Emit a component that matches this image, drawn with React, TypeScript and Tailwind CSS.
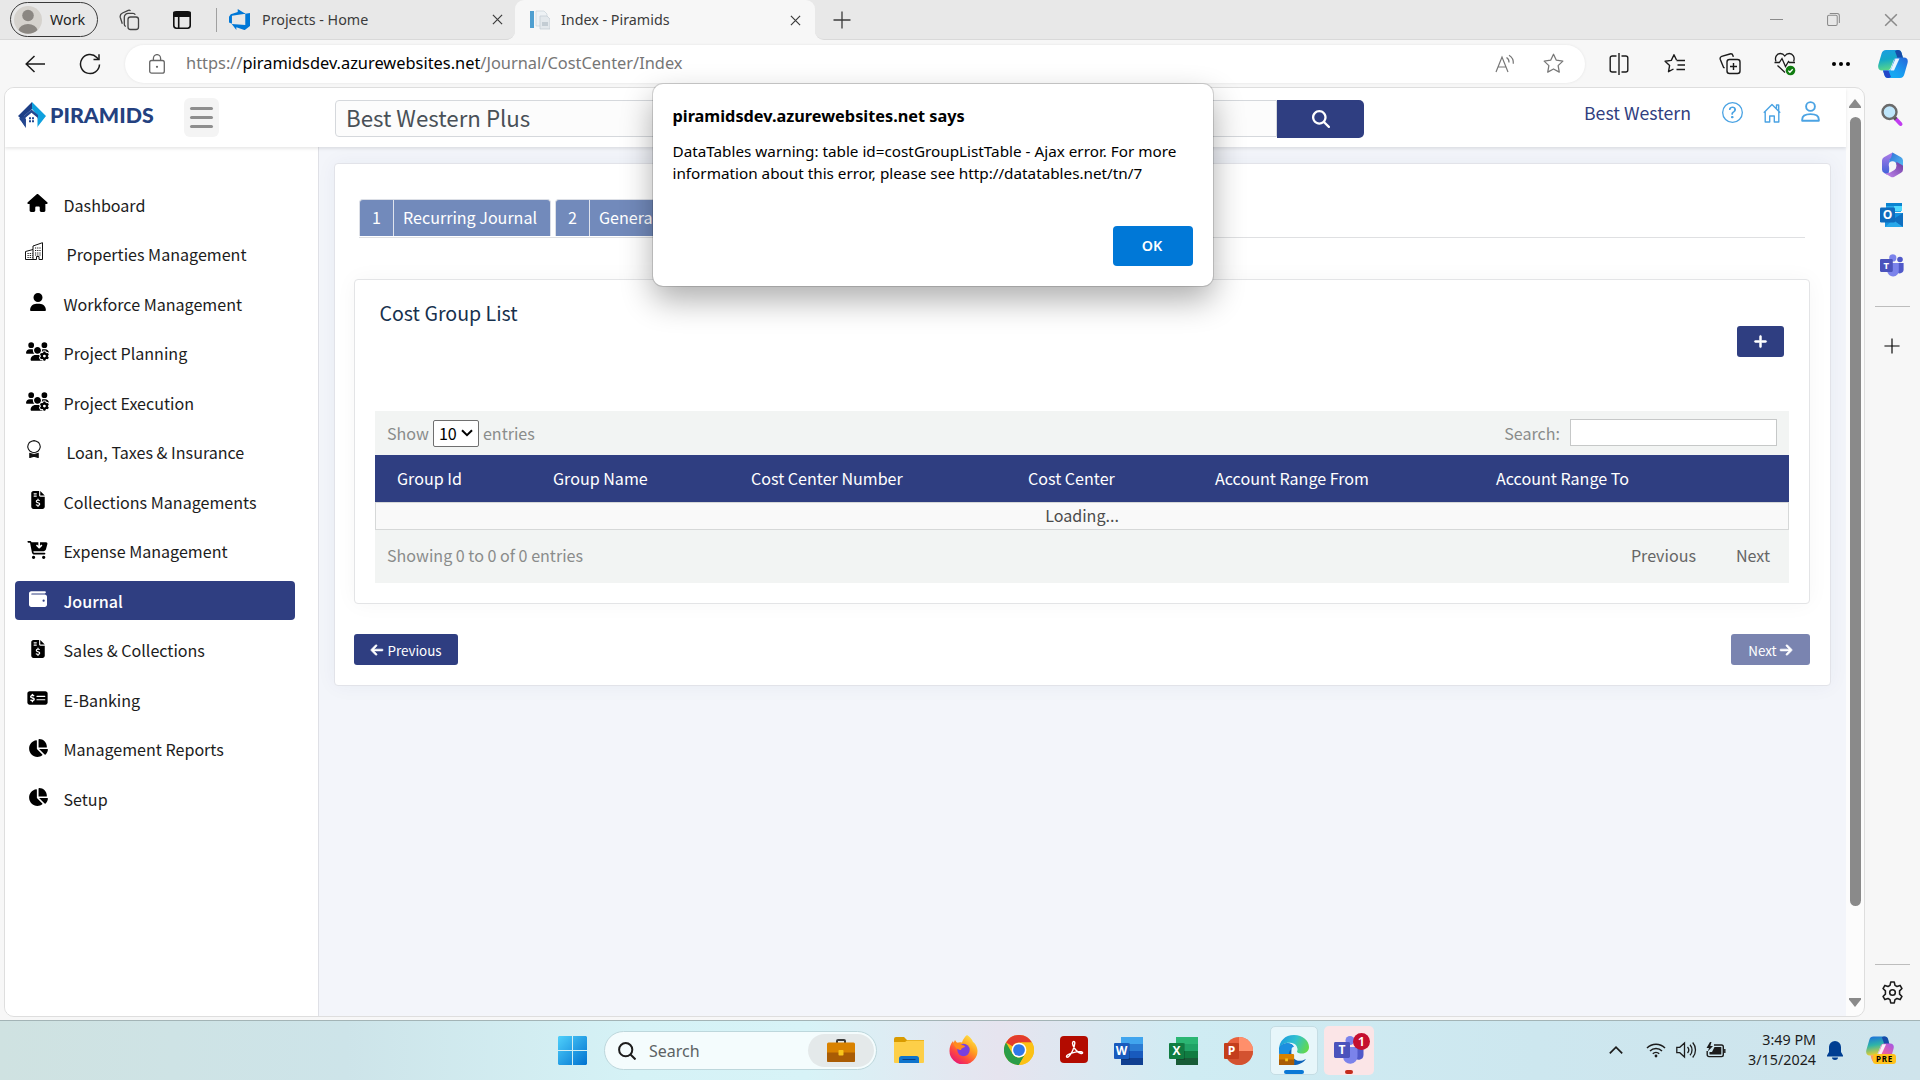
import React from "react";
import {
  FaHouse, FaUser, FaUsersGear, FaFileInvoiceDollar, FaCartArrowDown, FaWallet,
  FaMoneyCheckDollar, FaChartPie, FaMagnifyingGlass, FaPlus, FaArrowLeft, FaArrowRight,
} from "react-icons/fa6";
import { BsQuestionCircle } from "react-icons/bs";

type SvgProps = { className?: string };

/* ---------- browser icons ---------- */

const CloseIcon = ({ className = "size-3" }: SvgProps) => (
  <svg viewBox="0 0 12 12" className={className} fill="none" stroke="currentColor" strokeWidth="1.3">
    <path d="M1 1l10 10M11 1L1 11" />
  </svg>
);
const PlusThin = ({ className = "size-[18px]" }: SvgProps) => (
  <svg viewBox="0 0 18 18" className={className} fill="none" stroke="currentColor" strokeWidth="1.3">
    <path d="M9 0.5v17M0.5 9h17" />
  </svg>
);
const TabStackIcon = () => (
  <svg viewBox="0 0 22 22" className="size-[22px]" fill="none" stroke="#444" strokeWidth="1.3" strokeLinejoin="round">
    <rect x="9" y="8" width="10.5" height="12.5" rx="2.500" />
    <path d="M6.800 17.500a2.500 2.500 0 0 1-1.500-2.300V8.300a4 4 0 0 1 4-4h4.700a2.500 2.500 0 0 1 2.300 1.500" />
    <path d="M3.300 14.800L1.300 8.500A4 4 0 0 1 3.500 4L9.300 1.300a2 2 0 0 1 2.200.6" />
  </svg>
);
const WorkspaceIcon = () => (
  <svg viewBox="0 0 18 18" className="size-[18px]" fill="none" stroke="#111" strokeWidth="1.6">
    <rect x="0.8" y="0.8" width="16.4" height="16.4" rx="2.6" />
    <path d="M1 1.6h16v3.6H1z" fill="#111" />
    <path d="M5.7 5v12" />
  </svg>
);
const AzureDevOpsIcon = () => (
  <svg viewBox="0 0 20 20" className="size-[21px]">
    <path d="M20 3.7v12.4l-5.1 4L7 17.3V20l-4.4-5.7 12.9 1V4.500zM15.600 4.600L8.300 0v2.900L1.700 4.900 0 7.300v5.500l2.800 1.200V6.500z" fill="#0078d7" />
  </svg>
);
const PageFavicon = () => (
  <svg viewBox="0 0 20 20" className="size-5">
    <path d="M0 1h4v17H0z" fill="#4f9fd0" />
    <path d="M6 1h8l3 3v12H6z" fill="#eef2f5" stroke="#c9d3da" strokeWidth=".7" />
    <path d="M10 6h7l3 3v10H10z" fill="#e3e8ec" stroke="#c0cad2" strokeWidth=".7" />
    <path d="M12 12h6v4h-6z" fill="#c3ccd3" />
  </svg>
);
const BackIcon = () => (
  <svg viewBox="0 0 20 18" className="h-[18px] w-5" fill="none" stroke="#1b1b1b" strokeWidth="1.5">
    <path d="M9.500 1L1.200 9l8.300 8M1.200 9H20" />
  </svg>
);
const ReloadIcon = () => (
  <svg viewBox="0 0 22 22" className="size-[22px]" fill="none" stroke="#1b1b1b" strokeWidth="1.5">
    <path d="M20.500 11.500A9.500 9.500 0 1 1 17.800 4.400l1.600 1.800" />
    <path d="M20 1.200v5.400h-5.500" />
  </svg>
);
const LockIcon = () => (
  <svg viewBox="0 0 16 20" className="h-5 w-4" fill="none" stroke="#666" strokeWidth="1.3">
    <rect x="0.700" y="6.500" width="14.600" height="12.700" rx="2" />
    <path d="M4.400 6.500V4.200a3.600 3.600 0 0 1 7.200 0v2.300" />
    <circle cx="8" cy="12.800" r="1.100" fill="#666" stroke="none" />
  </svg>
);
const ReadAloudIcon = () => (
  <svg viewBox="0 0 20 20" className="size-5" fill="none" stroke="#777" strokeWidth="1.200">
    <path d="M1 18L7 3l6 15M3 13h8" />
    <path d="M11.500 3.500a5.500 5.500 0 0 1 2.500 5M14 1.200a9 9 0 0 1 4.300 8.500" />
  </svg>
);
const STAR = "M10 1.200l2.700 5.700 6.200.8-4.500 4.300 1.100 6.200L10 15.200l-5.500 3 1.100-6.200L1.100 7.700l6.200-.8z";
const StarIcon = () => (
  <svg viewBox="0 0 20 20" className="size-[21px]" fill="none" stroke="#777" strokeWidth="1.200" strokeLinejoin="round">
    <path d={STAR} />
  </svg>
);
const SplitIcon = () => (
  <svg viewBox="0 0 20 22" className="h-[22px] w-5" fill="none" stroke="#1b1b1b" strokeWidth="1.400">
    <path d="M7.500 3H3.200A2 2 0 0 0 1.200 5v12a2 2 0 0 0 2 2h4.300M12.500 3h4.300a2 2 0 0 1 2 2v12a2 2 0 0 1-2 2h-4.300M10 0v22" />
  </svg>
);
const FavoritesIcon = () => (
  <svg viewBox="0 0 22 20" className="h-[21px] w-[22px]" fill="none" stroke="#1b1b1b" strokeWidth="1.400" strokeLinejoin="round">
    <path d="M12.500 6.500L10 1.200 7.300 6.900 1.100 7.700l4.500 4.300-1.100 6.200L9.500 15.500" />
    <path d="M12.500 7h8.500M13.500 11.500H21M12.500 16H21" />
  </svg>
);
const CollectionsIcon = () => (
  <svg viewBox="0 0 22 22" className="size-[22px]" fill="none" stroke="#1b1b1b" strokeWidth="1.400">
    <rect x="8" y="6.500" width="13" height="14" rx="2.500" />
    <path d="M14.500 10v7M11 13.500h7" />
    <path d="M5.600 14.800l-1-.4-3.300-8A2.400 2.400 0 0 1 2.700 3.300l8.200-2.300A2.500 2.500 0 0 1 14 2.700l.3 1.200" />
  </svg>
);
const HealthIcon = () => (
  <svg viewBox="0 0 22 24" className="h-6 w-[22px]" fill="none" stroke="#1b1b1b" strokeWidth="1.300">
    <path d="M2 9.500C.3 5 3 1.500 6.300 1.500c2 0 3.500 1 4.500 2.500 1-1.500 2.500-2.500 4.500-2.500 3.300 0 6 3.500 4.300 8" />
    <path d="M.5 10.500h4.800L8 6.500l3.500 8 3-5 1 1H21M3.500 13.500l7.500 7" />
    <circle cx="16.500" cy="18.500" r="4.800" fill="#107c10" stroke="none" />
    <path d="M14.300 18.600l1.600 1.600 2.800-3" stroke="#fff" />
  </svg>
);
const CopilotIcon = ({ id, pre = false, className = "" }: { id: string; pre?: boolean; className?: string }) => (
  <svg viewBox="0 0 30 28" className={className}>
    <defs>
      <linearGradient id={`${id}a`} x1="0" y1="0" x2="0.200" y2="1">
        <stop offset="0" stopColor={pre ? "#1b6be0" : "#1b9de2"} />
        <stop offset=".5" stopColor={pre ? "#2fb4a8" : "#14a8c8"} />
        <stop offset="1" stopColor={pre ? "#e8cf2f" : "#58d68a"} />
      </linearGradient>
      <linearGradient id={`${id}b`} x1="0" y1="1" x2="1" y2="0">
        <stop offset="0" stopColor={pre ? "#ffb04a" : "#14b8f4"} />
        <stop offset=".5" stopColor={pre ? "#ef5fa0" : "#1a9bf0"} />
        <stop offset="1" stopColor={pre ? "#a157e8" : "#2764d8"} />
      </linearGradient>
    </defs>
    <path d="M8 0h12c2 0 3 1 3.600 3l1.400 5h-6c-2 0-3 1-3.600 3L13 17c-.7 2-1.500 3.500-4 3.500H4C1 20.500-.5 18 .4 14.500L3.600 3.500C4.300 1.200 5.700 0 8 0z" fill={`url(#${id}a)`} />
    <path d="M19 0h1c2 0 3 1 3.600 3l1.400 5h-5.500L17 1z" fill="#174ba8" />
    <path d="M22 28H10c-2 0-3-1-3.600-3L5 20.500h5c2 0 3-1 3.600-3l2.400-7c.7-2 1.500-3 4-3h6c3 0 4.400 2 3.500 5.700L26.400 24c-.7 2.600-2 4-4.400 4z" fill={`url(#${id}b)`} />
    <path d="M11 28h-1c-2 0-3-1-3.600-3L5 20.500h5.500L13 27z" fill={pre ? "#ff9d5c" : "#2447c8"} />
    <path d="M17.500 8.500h4l-5.500 12h-3.500z" fill="#fff" opacity=".9" />
  </svg>
);

/* ---------- edge sidebar icons ---------- */

const LoupeColor = () => (
  <svg viewBox="0 0 24 24" className="size-6">
    <path d="M14 14l6.500 7" stroke="#c13cf0" strokeWidth="4" strokeLinecap="round" />
    <path d="M14 14l2 2.200" stroke="#555" strokeWidth="3.500" />
    <circle cx="9.500" cy="9" r="7" fill="#bfe6fb" stroke="#6a6a6a" strokeWidth="2.400" />
  </svg>
);
const M365Icon = () => (
  <svg viewBox="0 0 22 26" className="h-[26px] w-[21px]">
    <defs>
      <linearGradient id="m1" x1="0" y1="0" x2="0" y2="1"><stop offset="0" stopColor="#b07be8" /><stop offset="1" stopColor="#3b63d8" /></linearGradient>
      <linearGradient id="m2" x1="0" y1="0" x2="1" y2="1"><stop offset="0" stopColor="#2f6fd6" /><stop offset="1" stopColor="#58c4f5" /></linearGradient>
      <linearGradient id="m3" x1="0" y1="1" x2="1" y2="0"><stop offset="0" stopColor="#c58af2" /><stop offset="1" stopColor="#6b3a9e" /></linearGradient>
    </defs>
    <path d="M11 0L2 4.800Q0 6 0 8.300v9.400Q0 20 2 21.200l3 1.700q2.500-1 2.500-4V9.500q0-2 2-3.300L13 4z" fill="url(#m1)" />
    <path d="M11 0l9 4.800q2 1.200 2 3.500v8.500l-2.500-1-6-3.800-6 2V9q0-2 2-3.500z" fill="url(#m2)" />
    <path d="M22 14v3.700q0 2.300-2 3.500L12.500 25.500q-1.500.8-3 0L2 21.200q4 1 7-.7l4-2.300q2-1.200 2-3.500v-5l5 2.800q2 1 2 1.500z" fill="url(#m3)" />
    <circle cx="11" cy="13" r="3.900" fill="#f7f7f7" />
  </svg>
);
const OutlookIcon = () => (
  <svg viewBox="0 0 24 24" className="size-6">
    <path d="M6 0h15v9H6z" fill="#28a8ea" /><path d="M14 0h8v8h-8z" fill="#50d9ff" /><path d="M6 0h16v3H6z" fill="#0a84d0" />
    <path d="M5 10h18v14H5z" fill="#1490df" /><path d="M23 10v14L12 17z" fill="#0f6fc0" /><path d="M5 24h18L13 17z" fill="#28a8ea" />
    <rect y="4.500" width="15" height="15" rx="1.300" fill="#0f6cbd" />
    <text x="7.500" y="16.300" fontSize="12" fontWeight="700" fontFamily="Open Sans, sans-serif" fill="#fff" textAnchor="middle">O</text>
  </svg>
);
const TeamsIcon = ({ className = "" }: SvgProps) => (
  <svg viewBox="0 0 30 28" className={className}>
    <circle cx="25" cy="6.500" r="3.500" fill="#5059c9" />
    <path d="M20 11h9.500v8a5 5 0 0 1-9.500 2z" fill="#5059c9" />
    <circle cx="16" cy="4.500" r="4.500" fill="#7b83eb" />
    <path d="M9 11h14.500v9a7 7 0 0 1-14.500 1z" fill="#7b83eb" />
    <rect y="6" width="16" height="16" rx="1.400" fill="#4b53bc" />
    <text x="8" y="18.300" fontSize="12" fontWeight="700" fontFamily="Open Sans, sans-serif" fill="#fff" textAnchor="middle">T</text>
  </svg>
);
const GearIcon = () => (
  <svg viewBox="0 0 24 24" className="size-[25px]" fill="none" stroke="#1b1b1b" strokeWidth="1.500" strokeLinejoin="round">
    <path d="M10.300 2h3.400l.7 3.100 1.900 1.100 3-1 1.800 3-2.300 2.200v3.200l2.300 2.200-1.800 3-3-1-1.900 1.100-.7 3.100h-3.400l-.7-3.100-1.900-1.100-3 1-1.800-3 2.300-2.200v-3.200L2.900 8.200l1.800-3 3 1 1.900-1.100z" />
    <circle cx="12" cy="12" r="2.700" />
  </svg>
);

/* ---------- page icons ---------- */

const PiramidsMark = () => (
  <svg viewBox="0 0 28 26" className="h-[26px] w-7">
    <path d="M14 0L0 14l6 5.500V14l8-7z" fill="#1d3f86" />
    <path d="M14 0l14 14-9 11.500V13l-5-6z" fill="#0ea0de" />
    <path d="M4 15.500L13.500 7.500 20 13v4l-6.500-5.500L8 16v9.500l-7-9z" fill="#24478f" />
    <path d="M7.500 15.800l6-5 6 5V25H15v-4h-3v4H7.500z" fill="#fff" />
    <path d="M11 15.300h2v2h-2zM14 15.300h2v2h-2zM11 18.200h2v2h-2zM14 18.200h2v2h-2z" fill="#24478f" />
    <path d="M8 16.500L7.800 26 4 20z" fill="#24478f" />
  </svg>
);
const HomeOutline = () => (
  <svg viewBox="0 0 18 20" className="h-5 w-[18px]" fill="none" stroke="#4ba3e3" strokeWidth="1.400" strokeLinejoin="round">
    <path d="M.8 9.800L9 1.500l8.200 8.300M13.500 6V2h2.200v6.200" />
    <path d="M2.200 8.800V19h4.500v-6h4.600v6h4.500V8.800" />
  </svg>
);
const PersonOutline = () => (
  <svg viewBox="0 0 19 21" className="h-[21px] w-[19px]" fill="none" stroke="#4ba3e3" strokeWidth="1.900" strokeLinejoin="round">
    <circle cx="9.500" cy="5.500" r="4.400" />
    <path d="M1.200 19.800v-1.300c0-3.500 3-5.400 8.300-5.400s8.300 1.900 8.300 5.400v1.300z" />
  </svg>
);
const BuildingIcon = () => (
  <svg viewBox="0 0 18 18" className="size-[18px]" fill="none" stroke="#111" strokeWidth="1">
    <path d="M8 17.500H.5V9.500L8 7.500V4L17.500.7v16.800H14v-3h-2.500v3H8zM8 7.500v10" />
    <path d="M2.500 11.500h5M2.500 13.500h5M2.500 15.500h5M10 6h6M10 8.500h6M10 11h6M10 13h6" strokeDasharray="1.200 1" />
  </svg>
);
const AwardIcon = () => (
  <svg viewBox="0 0 14 18" className="h-[18px] w-3.5" fill="none" stroke="#111" strokeWidth="1.100">
    <path d="M7 .6l2.300.7 2.300 1.100 1.200 2.200.5 2.300-.8 2.400-1.600 1.900-2.200 1-1.700.3-1.700-.3-2.200-1L1.500 9.300.7 6.900l.5-2.300 1.200-2.200L4.700 1.300z" />
    <path d="M2.800 13.500v4l4.200-1.300 4.200 1.300v-4L7 14.500z" fill="#111" />
  </svg>
);

/* ---------- page ---------- */

const navItems = [
  { label: "Dashboard", icon: <FaHouse className="h-[18px] w-[21px]" /> },
  { label: "Properties Management", icon: <BuildingIcon />, offset: true },
  { label: "Workforce Management", icon: <FaUser className="h-[18px] w-[16px]" /> },
  { label: "Project Planning", icon: <FaUsersGear className="h-[19px] w-[23px]" /> },
  { label: "Project Execution", icon: <FaUsersGear className="h-[19px] w-[23px]" /> },
  { label: "Loan, Taxes & Insurance", icon: <AwardIcon />, offset: true },
  { label: "Collections Managements", icon: <FaFileInvoiceDollar className="h-[18px] w-[14px]" /> },
  { label: "Expense Management", icon: <FaCartArrowDown className="h-[18px] w-[21px]" /> },
  { label: "Journal", icon: <FaWallet className="size-[18px]" />, active: true },
  { label: "Sales & Collections", icon: <FaFileInvoiceDollar className="h-[18px] w-[14px]" /> },
  { label: "E-Banking", icon: <FaMoneyCheckDollar className="h-[18px] w-[21px]" /> },
  { label: "Management Reports", icon: <FaChartPie className="h-[18px] w-[20px]" /> },
  { label: "Setup", icon: <FaChartPie className="h-[18px] w-[20px]" /> },
];

const columns = ["Group Id", "Group Name", "Cost Center Number", "Cost Center", "Account Range From", "Account Range To"];

function TabBar() {
  return (
    <div className="flex h-10 shrink-0 bg-[#f7f7f7] text-[14.3px] text-[#3b3b3b]">
      <div className="flex w-[515px] items-center rounded-br-[9px] border-b border-[#d9d9d9] bg-[#e8e8e8] pl-[10px]">
        <div className="flex h-[35px] w-[88px] items-center gap-2 rounded-full border-[1.5px] border-[#3a3a3a] pl-[3px]">
          <svg viewBox="0 0 28 28" className="size-7">
            <circle cx="14" cy="14" r="14" fill="#d5d2cd" />
            <circle cx="14" cy="9.500" r="5.800" fill="#8b8782" />
            <path d="M4.500 24a9.600 7 0 0 1 19 0 14 14 0 0 1-19 0z" fill="#8b8782" />
          </svg>
          <span className="text-[#1f1f1f]">Work</span>
        </div>
        <div className="ml-[21px]"><TabStackIcon /></div>
        <div className="ml-8"><WorkspaceIcon /></div>
        <div className="ml-[25px] h-6 w-px bg-[#a0a0a0]" />
        <div className="ml-[12px]"><AzureDevOpsIcon /></div>
        <span className="ml-[12px] flex-1 whitespace-nowrap">Projects - Home</span>
        <CloseIcon className="mr-3 size-[11px]" />
      </div>
      <div className="w-[300px] bg-[linear-gradient(#e8e8e8_50%,#f7f7f7_50%)]">
        <div className="flex h-full items-center rounded-t-[9px] bg-[#f7f7f7] pl-[15px]">
          <PageFavicon />
          <span className="ml-[11px] flex-1">Index - Piramids</span>
          <CloseIcon className="mr-[14px] size-[11px]" />
        </div>
      </div>
      <div className="flex flex-1 items-center rounded-bl-[9px] border-b border-[#d9d9d9] bg-[#e8e8e8] pl-[18px]">
        <PlusThin />
        <div className="ml-auto flex items-center gap-11 pr-[22px] text-[#8a8a8a]">
          <span className="h-px w-[13px] bg-[#8a8a8a]" />
          <svg viewBox="0 0 14 14" className="size-[13px]" fill="none" stroke="currentColor" strokeWidth="1.100">
            <rect x=".6" y="2.400" width="10.400" height="11" rx="1.500" /><path d="M3 .6h8a2.300 2.300 0 0 1 2.300 2.300v8" />
          </svg>
          <CloseIcon className="size-[14px]" />
        </div>
      </div>
    </div>
  );
}

function AddressBar() {
  return (
    <div className="flex h-[47px] shrink-0 items-center bg-[#f7f7f7] pl-[25px] pr-[12px]">
      <BackIcon />
      <div className="ml-[34px]"><ReloadIcon /></div>
      <div className="ml-[24px] flex h-[38px] w-[1460px] items-center rounded-full bg-white pl-6 pr-[21px] shadow-[0_0_3px_rgba(0,0,0,0.08)]">
        <LockIcon />
        <span className="ml-[21px] flex-1 text-[16.4px] text-[#767676]">
          https://<span className="text-black">piramidsdev.azurewebsites.net</span>/Journal/CostCenter/Index
        </span>
        <ReadAloudIcon />
        <div className="ml-[28px]"><StarIcon /></div>
      </div>
      <div className="ml-6 flex flex-1 items-center">
        <SplitIcon />
        <div className="ml-[35px]"><FavoritesIcon /></div>
        <div className="ml-[33px]"><CollectionsIcon /></div>
        <div className="ml-[33px]"><HealthIcon /></div>
        <div className="ml-[36px] flex gap-[3px]">
          <i className="size-1 rounded-full bg-black" /><i className="size-1 rounded-full bg-black" /><i className="size-1 rounded-full bg-black" />
        </div>
        <CopilotIcon id="cp" className="ml-auto h-7 w-[30px]" />
      </div>
    </div>
  );
}

function SiteHeader() {
  return (
    <header className="z-10 flex h-[59px] shrink-0 items-start bg-white pl-[13px] shadow-[0_2px_3px_rgba(0,0,0,0.09)]">
      <div className="mt-[14px] flex w-[166px] items-center gap-[4px]">
        <PiramidsMark />
        <span className="-mt-px font-[Lato,sans-serif] text-[21.4px] font-black leading-[26px] text-[#24417f]">PIRAMIDS</span>
      </div>
      <div className="mt-[10px] flex h-[39px] w-[35px] flex-col items-center justify-center gap-[6px] rounded-md bg-[#f4f4f4]">
        <i className="h-[3px] w-[23px] rounded-sm bg-[#8f8f8f]" /><i className="h-[3px] w-[23px] rounded-sm bg-[#8f8f8f]" /><i className="h-[3px] w-[23px] rounded-sm bg-[#8f8f8f]" />
      </div>
      <div className="ml-[116px] mt-[12px] flex h-[38px]">
        <div className="flex h-[37px] w-[942px] items-center rounded-l border border-[#d5d8dc] bg-[#fcfcfc] pb-[3px] pl-[10px] text-[22.3px] leading-[30px] text-[#495057]">Best Western Plus</div>
        <div className="flex w-[87px] items-center justify-center rounded-r-[5px] bg-[#2f3e81]"><FaMagnifyingGlass className="size-[18px] text-white" /></div>
      </div>
      <div className="ml-auto mt-[13px] flex items-center pr-[26px] text-[#4ba3e3]">
        <span className="-mt-px mr-[31px] text-[17.700px] leading-6 text-[#323f80]">Best Western</span>
        <BsQuestionCircle className="size-[21px]" />
        <div className="ml-[20px]"><HomeOutline /></div>
        <div className="ml-[20px] -mt-[3px]"><PersonOutline /></div>
      </div>
    </header>
  );
}

function SideNav() {
  return (
    <nav className="flex w-[314px] shrink-0 flex-col gap-[10.5px] border-r border-[#dfe0e6] bg-white pl-[10px] pt-[38.2px] shadow-[1px_0_3px_rgba(0,0,0,0.12)]">
      {navItems.map((n) => (
        <div
          key={n.label}
          className={n.active
            ? "flex h-[39px] w-[280px] shrink-0 items-center rounded bg-[#2f3e81] font-medium text-white"
            : "flex h-[39px] w-[280px] shrink-0 items-center text-[#1c1c1c]"}
        >
          <span className={n.offset ? "-mt-[6px] flex w-[38px] justify-center" : "-mt-[3px] flex w-[45px] justify-center"}>
            <span className={n.active ? "text-white" : "text-black"}>{n.icon}</span>
          </span>
          <span className={n.offset ? "ml-[13.500px]" : "ml-[3.500px]"}>{n.label}</span>
        </div>
      ))}
    </nav>
  );
}

function WizardTab({ n, label }: { n: string; label: string }) {
  return (
    <div className="flex h-[37px] items-center rounded-t border border-b-0 border-[#dcdfe6] bg-[#728abb] text-white">
      <span className="flex h-full w-[34px] items-center justify-center border-r border-[#dfe4ee] pb-[2px]">{n}</span>
      <span className="pb-[2px] pl-[9px] pr-[13px]">{label}</span>
    </div>
  );
}

function CostGroupCard() {
  return (
    <section className="ml-[19px] mt-[41px] flex h-[325px] w-[1456px] flex-col rounded border border-[#e3e4e6] bg-white px-5 shadow-[0_0_22px_rgba(0,0,0,0.04)]">
      <h2 className="ml-[4.500px] mt-[19px] text-[19.6px] leading-7 text-[#16304d]">Cost Group List</h2>
      <div className="mr-[5px] -mt-px flex h-[31px] w-[47px] items-center justify-center self-end rounded-[3px] bg-[#2f3e81] text-white">
        <FaPlus className="size-[15px]" stroke="currentColor" strokeWidth="20" />
      </div>
      <div className="mt-[54px] flex h-11 items-center justify-between bg-[#f2f4f3] px-3 text-[#8a8c8b]">
        <div className="flex items-center">
          Show
          <span className="ml-[4px] mr-1 flex h-[27px] w-[46px] items-center justify-between rounded-[2px] border border-[#6f6f6f] bg-white px-[5px] text-black">
            10
            <svg viewBox="0 0 12 8" className="h-2 w-3" fill="none" stroke="#000" strokeWidth="2"><path d="M1 1.200l5 5 5-5" /></svg>
          </span>
          entries
        </div>
        <div className="flex items-center">
          <span className="-mt-px">Search:</span><span className="ml-[10px] -mt-px h-[27px] w-[207px] border border-[#c6c8c8] bg-white" />
        </div>
      </div>
      <div className="grid h-[47px] grid-cols-[156px_198px_277px_187px_281px_1fr] items-center bg-[#2f3e81] pb-[2px] text-white">
        {columns.map((c) => <span key={c} className="pl-[22px]">{c}</span>)}
      </div>
      <div className="flex h-7 items-center justify-center border border-[#d6d8d8] bg-[#f9f9f9] pb-[2px] text-[#4c4c4c]">Loading...</div>
      <div className="flex h-[53px] items-center justify-between bg-[#f2f4f3] pb-[4px] pl-3 pr-[19px] text-[#8a8c8b]">
        <span>Showing 0 to 0 of 0 entries</span>
        <span className="flex gap-[40px] pt-px text-[#666]"><span>Previous</span><span>Next</span></span>
      </div>
    </section>
  );
}

function MainPanel() {
  return (
    <main className="flex-1 bg-[#f3f5fa] pl-[15px] pt-4">
      <div className="h-[523px] w-[1497px] rounded border border-[#e2e3e9] bg-white shadow-[0_0_20px_rgba(40,50,110,0.05)]">
        <div className="ml-6 mt-[35px] flex h-[39px] w-[1446px] items-start gap-1 border-b border-[#dfe0e2]">
          <WizardTab n="1" label="Recurring Journal" />
          <WizardTab n="2" label="General Journal" />
        </div>
        <CostGroupCard />
        <div className="ml-[19px] mt-[30px] flex w-[1456px] justify-between text-[13.400px] text-white">
          <div className="flex h-[31px] w-[104px] items-center justify-center gap-[3px] rounded-[3px] bg-[#2f3e81]"><FaArrowLeft className="size-[14px]" stroke="currentColor" strokeWidth="24" />Previous</div>
          <div className="flex h-[31px] w-[79px] items-center justify-center gap-[2px] rounded-[3px] bg-[#7a84b0]">Next<FaArrowRight className="size-[14px]" stroke="currentColor" strokeWidth="24" /></div>
        </div>
      </div>
    </main>
  );
}

function EdgeSidebar() {
  return (
    <aside className="flex w-[54px] flex-col items-center bg-[#f7f7f7] pt-[16px]">
      <LoupeColor />
      <div className="mt-[25px]"><M365Icon /></div>
      <div className="mt-[25px]"><OutlookIcon /></div>
      <TeamsIcon className="mt-[27px] h-[23px] w-6" />
      <div className="mt-[29px] h-px w-[35px] bg-[#bdbdbd]" />
      <PlusThin className="mt-[31px] size-4" />
      <div className="mb-[15px] mt-auto h-px w-[35px] bg-[#bdbdbd]" />
      <div className="mb-[12px]"><GearIcon /></div>
    </aside>
  );
}

function AlertDialog() {
  return (
    <div role="alertdialog" className="absolute left-[653px] top-[84px] z-20 flex h-[202px] w-[560px] flex-col rounded-[10px] bg-white pb-5 pl-[19.500px] pr-5 pt-5 text-black shadow-[0_0_0_1px_rgba(0,0,0,0.14),0_14px_32px_rgba(0,0,0,0.32)]">
      <h1 className="text-[16.300px] font-bold leading-6">piramidsdev.azurewebsites.net says</h1>
      <p className="mt-[12px] whitespace-nowrap text-[15.270px] leading-[22px]">
        DataTables warning: table id=costGroupListTable - Ajax error. For more<br />
        information about this error, please see http://datatables.net/tn/7
      </p>
      <div className="mt-auto flex h-10 w-20 items-center justify-center self-end rounded bg-[#0078d7] pb-px pr-[2px] text-[14.300px] font-semibold text-white">OK</div>
    </div>
  );
}

/* ---------- taskbar ---------- */

const StartIcon = () => (
  <svg viewBox="0 0 29 29" className="size-[29px]">
    <defs><linearGradient id="win" x1="0" y1="0" x2="1" y2="1"><stop offset="0" stopColor="#4fd0fb" /><stop offset="1" stopColor="#0072d0" /></linearGradient></defs>
    <path d="M1 0h13v14H0V1zM15 0h13l1 1v13H15zM0 15h14v14H1l-1-1zM15 15h14v13l-1 1H15z" fill="url(#win)" />
  </svg>
);
const Briefcase = ({ className = "" }: SvgProps) => (
  <svg viewBox="0 0 28 23" className={className}>
    <path d="M10 4V2q0-1 1-1h6q1 0 1 1v2" fill="none" stroke="#3b3b3b" strokeWidth="2" />
    <rect y="3.500" width="28" height="19.500" rx="1.500" fill="#d98200" />
    <path d="M0 13.500h28v8q0 1.500-1.500 1.500h-25Q0 23 0 21.500z" fill="#a95c05" />
    <rect x="11.500" y="11" width="5" height="5.500" rx=".8" fill="#f8c51c" />
  </svg>
);
const FolderIcon = () => (
  <svg viewBox="0 0 30 27" className="h-[27px] w-[30px]">
    <path d="M0 2q0-2 2-2h8l3 3h17v6H0z" fill="#d99b00" />
    <path d="M0 5h11l2-1.500h17V25q0 1-1 1H1q-1 0-1-1z" fill="#fdcf48" />
    <path d="M5 26v-4.500Q5 19 7.500 19h15q2.500 0 2.500 2.500V26z" fill="#0f74cc" />
    <path d="M8.500 22.500h13" stroke="#083f83" />
  </svg>
);
const FirefoxIcon = () => (
  <svg viewBox="0 0 29 29" className="size-[29px]">
    <defs><linearGradient id="ff" x1="0.900" y1="0" x2="0.200" y2="1"><stop offset="0" stopColor="#fff44f" /><stop offset=".4" stopColor="#ffa01f" /><stop offset=".7" stopColor="#ff4a3f" /><stop offset="1" stopColor="#e3107c" /></linearGradient></defs>
    <path d="M18 0c3 2 5 4 6 7 2 1 4.500 5 4.500 9a14 13.500 0 0 1-28 0c0-4 1-7 3.500-10l.5 2 1.500-3 2 3c2-1 3-1 5-.5 1-3 2.500-5.500 5-7.500z" fill="url(#ff)" />
    <circle cx="14.500" cy="15" r="6.200" fill="#7a3fe0" />
    <path d="M4 8c4-1 7 0 9 2 2 0 3 1 3 2-2 1-4 1-4 3-3 0-6-2-8-7z" fill="#ff8a1f" />
  </svg>
);
const ChromeIcon = () => (
  <svg viewBox="0 0 48 48" className="size-[30px]">
    <circle cx="24" cy="24" r="24" fill="#fbc116" />
    <path d="M3.200 12A24 24 0 0 1 44.800 12H24a12 12 0 0 0-10.400 6z" fill="#e33b2e" />
    <path d="M3.200 12a24 24 0 0 0 20.800 36l10.400-18A12 12 0 0 1 13.600 30z" fill="#2a9d48" />
    <path d="M44.800 12H24a12 12 0 0 1 10.400 18L24 48A24 24 0 0 0 44.800 12z" fill="#fbc116" />
    <circle cx="24" cy="24" r="11.800" fill="#fff" /><circle cx="24" cy="24" r="9.400" fill="#2f78e8" />
  </svg>
);
const AcrobatIcon = () => (
  <svg viewBox="0 0 28 27" className="h-[27px] w-7">
    <rect width="28" height="27" rx="4" fill="#b30b00" />
    <path d="M6.500 20.500c0-2.500 11-5.500 15-4.700 2 .6 1 2.200-1 1.500-3-1-8-6-8-10 0-2.500 2.500-2.500 2.300 0C14.500 12 11 18.500 8.500 20.700c-1 .9-2 .8-2-.2z" fill="none" stroke="#fff" strokeWidth="1.400" />
  </svg>
);
function OfficeIcon({ letter, stripes, badge }: { letter: string; stripes: [string, string, string, string]; badge: string }) {
  return (
    <svg viewBox="0 0 29 28" className="h-7 w-[29px]">
      <path d="M7 0h22v7H7z" fill={stripes[0]} /><path d="M7 7h22v7H7z" fill={stripes[1]} />
      <path d="M7 14h22v7H7z" fill={stripes[2]} /><path d="M7 21h22v7H7z" fill={stripes[3]} />
      <path d="M7 6h9v17H7z" fill="#000" opacity=".18" />
      <rect y="6" width="15" height="16" rx="1" fill={badge} />
      <text x="7.500" y="18.300" fontSize="12" fontWeight="700" fontFamily="Open Sans, sans-serif" fill="#fff" textAnchor="middle">{letter}</text>
    </svg>
  );
}
const PowerPointIcon = () => (
  <svg viewBox="0 0 29 28" className="h-7 w-[29px]">
    <circle cx="15" cy="14" r="14" fill="#e8603c" />
    <path d="M15 0a14 14 0 0 1 14 14H15z" fill="#ff8f6b" />
    <path d="M1 14h28a14 14 0 0 1-28 0z" fill="#d35230" />
    <rect y="6" width="15" height="16" rx="1" fill="#c43e1c" />
    <text x="7.500" y="18.300" fontSize="12" fontWeight="700" fontFamily="Open Sans, sans-serif" fill="#fff" textAnchor="middle">P</text>
  </svg>
);
const EdgeIcon = () => (
  <svg viewBox="0 0 30 30" className="size-[30px]">
    <defs>
      <linearGradient id="eg" x1="0" y1="0.300" x2="1" y2="0.600"><stop offset="0" stopColor="#1b9be0" /><stop offset=".5" stopColor="#30c2cf" /><stop offset="1" stopColor="#63d94c" /></linearGradient>
    </defs>
    <path d="M0 15C0 6 6 0 15 0s15 6 15 12c0 4-3 6.500-7 6.500s-6-1.500-5-3.500c1-3-1-6-5-7C7 7 2 9 0 15z" fill="url(#eg)" />
    <path d="M0 14c2-5 8-7 12-5 3 1.500 3 3 2 4.500-3 3-2 9 3 11.500 3 1.500 6 1 10-1-3 4-8 6-12 6C6 30-.5 23 0 14z" fill="#0c62b8" />
    <path d="M0 14c2-5 8-7 12-5 3 1.500 3 3 2 4.500C9 15 8 22 12 29 5 28-.5 22 0 14z" fill="#1b8fe0" />
    <circle cx="15.500" cy="14.800" r="3" fill="#e7f6fa" />
    <g transform="translate(0 18.500) scale(.54 .5)">
      <rect y="1" width="28" height="22" rx="2" fill="#d98200" /><path d="M0 12h28v11H0z" fill="#a95c05" /><rect x="11.500" y="10" width="5" height="5.500" fill="#f8c51c" />
    </g>
  </svg>
);

function Taskbar() {
  return (
    <footer className="flex h-[60px] shrink-0 items-center border-t border-[#a3b4b6] bg-[linear-gradient(90deg,#cfe2e1_0%,#cde4e9_18%,#d5f2f6_33%,#d7f3f7_42%,#e6e4ef_52%,#cfecf3_62%,#cde7ef_80%,#cfe4ec_100%)] pl-[558px] pr-[26px]">
      <StartIcon />
      <div className="ml-[17px] flex h-[39px] w-[273px] items-center rounded-full border border-[#bdd7dc] bg-[#f4fcfd] pl-[13px] pr-[2px]">
        <svg viewBox="0 0 18 18" className="size-[18px]" fill="none" stroke="#1d1d1d" strokeWidth="2"><circle cx="7.700" cy="7.700" r="6.600" /><path d="M12.500 12.500l5 5" /></svg>
        <span className="ml-[13px] flex-1 text-base text-[#5c6264]">Search</span>
        <span className="flex h-[33px] w-[66px] items-center justify-center rounded-full bg-[#e4e9ea]"><Briefcase className="h-[23px] w-7" /></span>
      </div>
      <div className="ml-[17px]"><FolderIcon /></div>
      <div className="ml-[25px] -mt-[2px]"><FirefoxIcon /></div>
      <div className="ml-[26px] -mt-px"><ChromeIcon /></div>
      <div className="ml-[26px] -mt-[3px]"><AcrobatIcon /></div>
      <div className="ml-[26px]"><OfficeIcon letter="W" stripes={["#41a5ee", "#2b7cd3", "#185abd", "#103f91"]} badge="#185abd" /></div>
      <div className="ml-[26px]"><OfficeIcon letter="X" stripes={["#2bb673", "#21a366", "#107c41", "#185c37"]} badge="#107c41" /></div>
      <div className="ml-[26px]"><PowerPointIcon /></div>
      <div className="ml-[17px] flex h-[49px] w-12 flex-col items-center rounded-[5px] border border-[#c5dde4] bg-[#e7f6fa] pt-2">
        <EdgeIcon /><i className="mt-[5px] h-1 w-5 rounded-full bg-[#0a78d6]" />
      </div>
      <div className="relative ml-[6px] flex h-[49px] w-[50px] flex-col items-center rounded-[5px] bg-[#fbe5e7] pt-[10px]">
        <TeamsIcon className="h-7 w-[30px]" /><i className="mt-[6px] h-1 w-2 rounded-full bg-[#c42b1c]" />
        <span className="absolute left-[29px] top-[7px] flex size-[17px] items-center justify-center rounded-full bg-[#c50f2f] text-[13px] font-semibold leading-none text-white">1</span>
      </div>
      <div className="-mt-[2px] ml-auto flex items-center text-[#1c1c1c]">
        <svg viewBox="0 0 14 8" className="h-2 w-3.5" fill="none" stroke="currentColor" strokeWidth="1.700"><path d="M.8 7.300L7 1.200l6.200 6.100" /></svg>
        <svg viewBox="0 0 20 16" className="ml-[23px] h-4 w-5" fill="none" stroke="currentColor" strokeWidth="1.500">
          <path d="M1 6a12.700 12.700 0 0 1 18 0M4 9a8.500 8.500 0 0 1 12 0M6.800 11.700a4.600 4.600 0 0 1 6.400 0" /><circle cx="10" cy="14" r="1.400" fill="currentColor" stroke="none" />
        </svg>
        <svg viewBox="0 0 21 18" className="ml-[10px] h-[18px] w-[21px]" fill="none" stroke="currentColor" strokeWidth="1.300">
          <path d="M.8 6.300h3L8.500 2v14l-4.700-4.300h-3zM11.500 6a4.500 4.500 0 0 1 0 6M14 3.700a8 8 0 0 1 0 10.600M16.700 1.500a11.500 11.500 0 0 1 0 15" />
        </svg>
        <svg viewBox="0 0 20 16" className="ml-[9px] h-4 w-5" fill="none" stroke="currentColor" strokeWidth="1.400">
          <path d="M8 3h7.500A1.800 1.800 0 0 1 17.300 4.800v8a1.800 1.800 0 0 1-1.800 1.800H3A1.800 1.800 0 0 1 1.200 12.800V9M18.800 7v4" />
          <path d="M8.500 5h6.800v7.500H3.500V10H6zM4 0L.5 6H3L1.800 9.500 7 4H4.300L5.500 0z" fill="currentColor" stroke="none" />
        </svg>
        <div className="ml-[22px] text-right text-[14.300px] leading-5"><div>3:49 PM</div><div>3/15/2024</div></div>
        <svg viewBox="0 0 16 19" className="ml-[11px] mt-[2px] h-[19px] w-4" fill="#003e92">
          <path d="M8 0a6 6 0 0 1 6 6v5l2 3.500v1H0v-1L2 11V6a6 6 0 0 1 6-6zM5 16.500h6a3 2.400 0 0 1-6 0z" />
        </svg>
        <div className="relative ml-[23px]">
          <CopilotIcon id="cpt" pre className="h-[27px] w-[28px]" />
          <span className="absolute left-[7px] top-[18px] flex h-[10px] w-[23px] items-center justify-center rounded-[3px] bg-[#ffc21a] text-[8px] font-bold leading-none tracking-[0.800px] text-black">PRE</span>
        </div>
      </div>
    </footer>
  );
}

export default function App() {
  return (
    <div className="relative flex h-[1080px] w-[1920px] flex-col overflow-hidden bg-[#f7f7f7] font-['Noto_Sans','Open_Sans',sans-serif]">
      <TabBar />
      <AddressBar />
      <div className="flex h-[930px] shrink-0">
        <div className="ml-[4px] flex w-[1861px] shrink-0 overflow-hidden rounded-[10px] border border-[#dedede] bg-[#fcfcfc] font-['Noto_Sans_CJK_SC',sans-serif] text-[16.080px] leading-6">
          <div className="flex w-[1841px] shrink-0 flex-col">
            <SiteHeader />
            <div className="flex flex-1">
              <SideNav />
              <MainPanel />
            </div>
          </div>
          <div className="flex flex-1 flex-col items-center pb-[9px] pt-[11px]">
            <svg viewBox="0 0 12 9" className="h-[9px] w-3" fill="#8a8a8a"><path d="M6 0l6 7.500V9H0V7.500z" /></svg>
            <i className="mt-[9px] h-[789px] w-[11px] rounded-full bg-[#8a8a8a]" />
            <svg viewBox="0 0 12 9" className="mt-auto h-[9px] w-3" fill="#8a8a8a"><path d="M6 9l6-7.500V0H0v1.500z" /></svg>
          </div>
        </div>
        <EdgeSidebar />
      </div>
      <div className="h-[3px] shrink-0" />
      <Taskbar />
      <AlertDialog />
    </div>
  );
}
